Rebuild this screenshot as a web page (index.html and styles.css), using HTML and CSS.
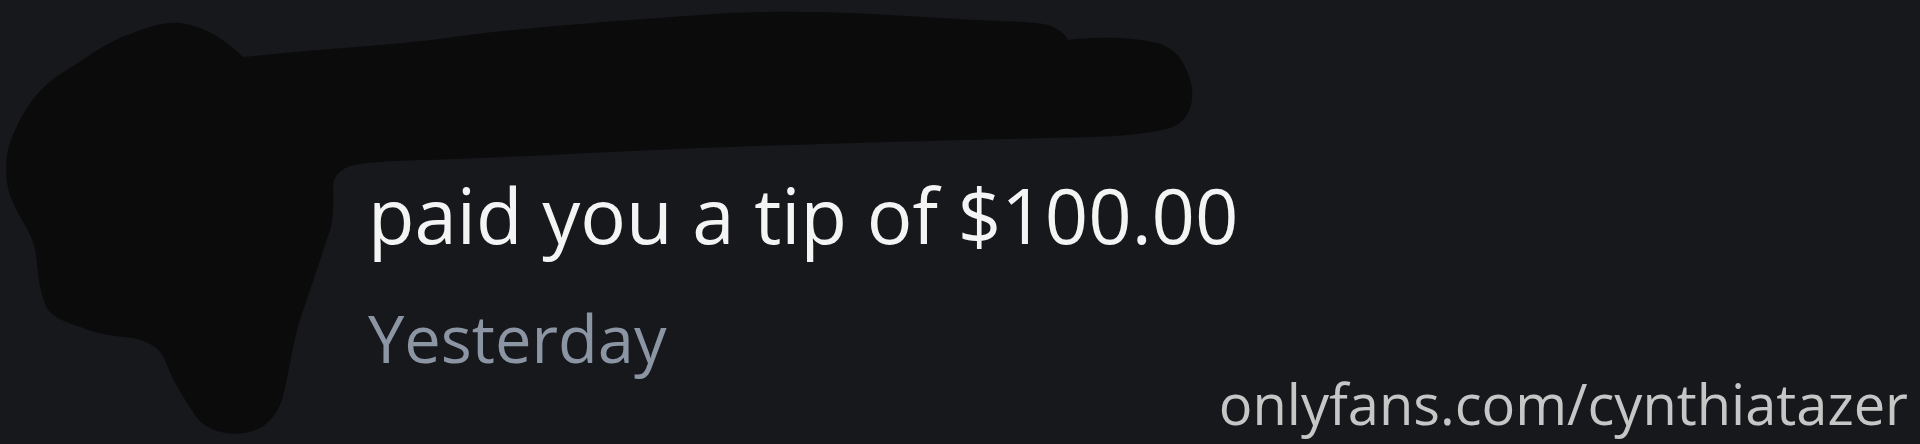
FILE: index.html
```html
<!DOCTYPE html>
<html lang="en">
<head>
  <meta charset="UTF-8">
  <meta name="viewport" content="width=device-width, initial-scale=1.0">
  <title>Notification</title>
  <link rel="stylesheet" href="styles.css">
</head>
<body>
  <main class="screen">
    <div class="notification">
      <div class="avatar"></div>
      <div class="body">
        <p class="message">paid you a tip of $100.00</p>
        <p class="time">Yesterday</p>
      </div>
    </div>

    <!-- marker scribble over avatar and name -->
    <svg class="redact" width="1260" height="444" viewBox="0 0 1260 444">
      <path d="M243 57 C330 48 400 45 453 37 C520 28 600 22 729 13 C800 10 851 12 974 20 C1020 22 1045 22 1053 27 C1062 31 1066 36 1068 40 C1090 37 1130 36 1157 43 C1175 48 1185 60 1191 83 C1195 100 1190 118 1175 126 C1160 133 1120 136 1096 137 C1000 139 900 141 729 147 C620 151 500 158 422 160 C390 161 365 162 350 166 C340 170 334 176 333 185 C334 210 332 225 330 230 C322 255 310 290 300 320 C292 345 288 380 282 400 C275 420 262 430 245 433 C225 436 205 430 195 415 C185 400 172 380 165 360 C160 348 150 342 133 338 C115 336 95 334 83 328 C65 322 55 318 48 310 C40 295 38 275 36 255 C34 235 20 220 12 200 C5 185 4 160 10 143 C22 110 40 85 67 70 C90 55 110 40 133 33 C150 26 165 22 180 23 C205 26 225 40 243 57 Z" />
    </svg>

    <span class="watermark">onlyfans.com/cynthiatazer</span>
  </main>
</body>
</html>
```

FILE: styles.css
```css
* {
  margin: 0;
  padding: 0;
  box-sizing: border-box;
}

:root {
  --bg-color: #17181c;
  --font-open: "Open Sans", "Noto Sans", sans-serif;
}

html,
body {
  height: 100%;
}

body {
  background-color: var(--bg-color);
  font-family: var(--font-open);
  overflow: hidden;
}

.screen {
  position: relative;
  height: 100%;
}

.notification {
  display: flex;
  padding-top: 170px;
}

.avatar {
  flex: 0 0 368px;
}

.body {
  display: flex;
  flex-direction: column;
  gap: 38px;
}

.message {
  font-size: 76px;
  line-height: 90px;
  color: #f4f4f5;
  white-space: nowrap;
}

.time {
  font-size: 65px;
  line-height: 80px;
  color: #8b95a3;
}

.redact {
  position: absolute;
  top: 0;
  left: 0;
}
.redact path {
  fill: #0b0b0c;
}

.watermark {
  position: absolute;
  right: 12px;
  bottom: 6px;
  font-size: 56px;
  line-height: 70px;
  color: #c6c6c6;
  white-space: nowrap;
}
```
